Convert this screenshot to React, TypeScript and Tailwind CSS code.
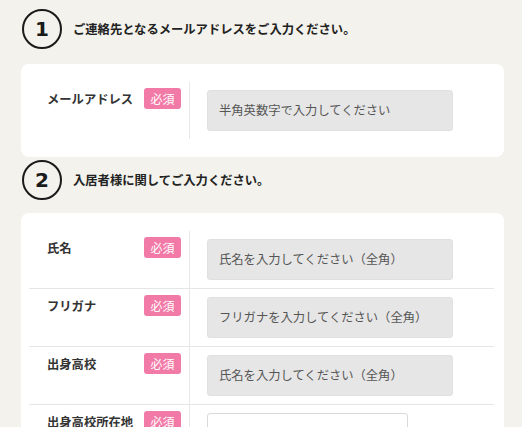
import React from 'react';

const jp = { fontFamily: '"Noto Sans CJK JP", "Noto Sans", sans-serif' };

type Field = {
  label: string;
  placeholder: string;
  kind?: 'text' | 'select';
};

const emailFields: Field[] = [
  { label: 'メールアドレス', placeholder: '半角英数字で入力してください' },
];

const residentFields: Field[] = [
  { label: '氏名', placeholder: '氏名を入力してください（全角）' },
  { label: 'フリガナ', placeholder: 'フリガナを入力してください（全角）' },
  { label: '出身高校', placeholder: '氏名を入力してください（全角）' },
  { label: '出身高校所在地', placeholder: '都道府県を選択してください', kind: 'select' },
];

function StepHeader({ num, title }: { num: string; title: string }) {
  return (
    <div className="flex items-center gap-[11px] pl-px">
      <div className="w-[40px] h-[40px] rounded-full border-2 border-[#1a1a1a] flex items-center justify-center shrink-0">
        <span
          className="text-[20px] font-bold leading-none text-[#1a1a1a]"
          style={{ fontFamily: '"DejaVu Sans", sans-serif' }}
        >
          {num}
        </span>
      </div>
      <h2 className="text-[12.3px] font-bold leading-[18px] text-[#222]">{title}</h2>
    </div>
  );
}

function Badge() {
  return (
    <span className="w-[37px] h-[21px] rounded-[3px] bg-[#f27aa7] text-white text-[12px] leading-none flex items-center justify-center shrink-0">
      必須
    </span>
  );
}

function FieldRow({ field, last }: { field: Field; last: boolean }) {
  return (
    <div className={`flex ${last ? '' : 'border-b border-[#e6e6e6]'}`}>
      {/* label cell */}
      <div className="w-[161px] shrink-0 border-r border-[#e8e8e8] pl-[18px] pr-[8px] pt-[6px] flex justify-between items-start">
        <span className="text-[12.3px] font-bold leading-[21px] text-[#333] mt-px">{field.label}</span>
        <Badge />
      </div>
      {/* input cell */}
      <div className="flex-1 pl-[17px] py-[8px]">
        {field.kind === 'select' ? (
          <div className="w-[201px] h-[41px] rounded-[3px] border border-[#d9d9d9] bg-white px-[12px] pt-[10px] text-[12.3px] leading-[20px] text-[#b5c2c6]">
            {field.placeholder}
          </div>
        ) : (
          <div className="w-[246px] h-[41px] rounded-[3px] border border-[#e0e0e0] bg-[#e6e6e6] px-[11px] flex items-center text-[12.3px] text-[#555]">
            {field.placeholder}
          </div>
        )}
      </div>
    </div>
  );
}

function Card({ fields }: { fields: Field[] }) {
  return (
    <div className="bg-white rounded-[8px] pl-[8px] pr-[10px] pt-[18px] pb-[18px]">
      {fields.map((f, i) => (
        <FieldRow key={f.label} field={f} last={i === fields.length - 1} />
      ))}
    </div>
  );
}

export default function App() {
  return (
    <div className="h-screen overflow-hidden bg-[#f3f2ec]" style={jp}>
      <div className="pl-[21px] pr-[18px] pt-[9px]">
        <StepHeader num="1" title="ご連絡先となるメールアドレスをご入力ください。" />
        <div className="mt-[15px]">
          <Card fields={emailFields} />
        </div>
        <div className="mt-[3px]">
          <StepHeader num="2" title="入居者様に関してご入力ください。" />
        </div>
        <div className="mt-[13px]">
          <Card fields={residentFields} />
        </div>
      </div>
    </div>
  );
}
